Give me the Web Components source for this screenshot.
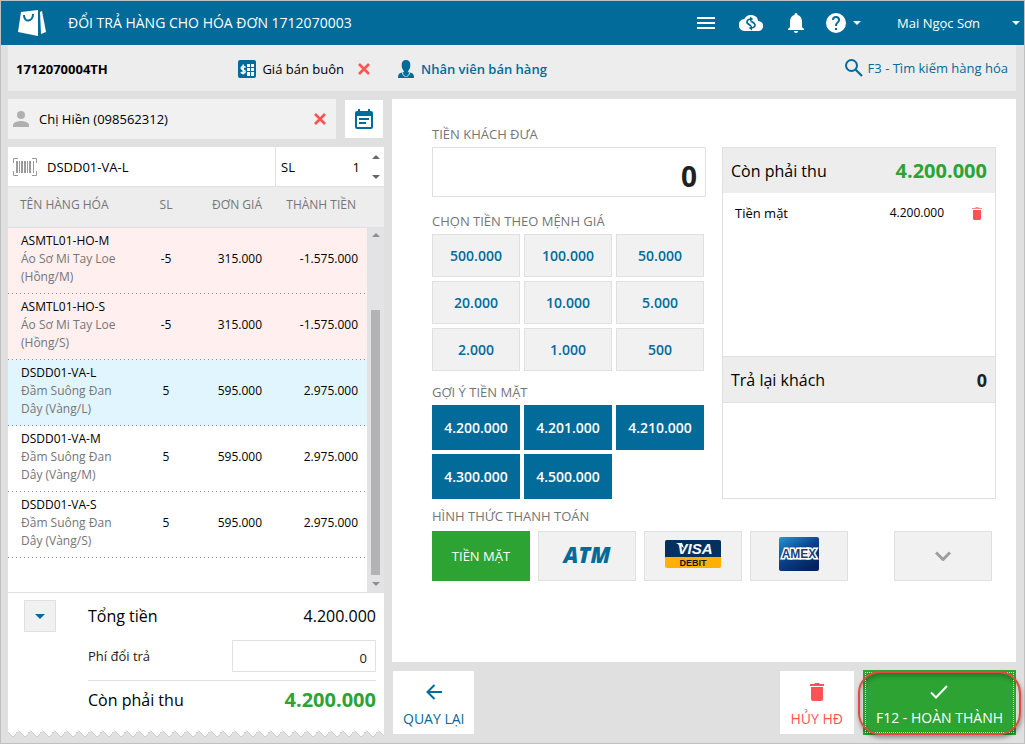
<!DOCTYPE html>
<html lang="vi">
<head>
<meta charset="utf-8">
<meta name="viewport" content="width=device-width, initial-scale=1">
<title>Đổi trả hàng</title>
<style>
  html, body { margin: 0; }
  body {
    --blue: #026b99;
    --green: #2ca333;
    --red: #ff5252;
    --line: #e0e0e0;
    --muted: #757575;
    font: 13px/18px "Open Sans", "Noto Sans", sans-serif;
    color: #000;
    background: #e0e0e0;
  }
</style>
</head>
<body>
<pos-app></pos-app>

<script>
const RESET = `
  *, *::before, *::after { box-sizing: border-box; }
  :host { box-sizing: border-box; }
  :host([hidden]) { display: none; }
  button, input { font: inherit; color: inherit; margin: 0; border: 0; padding: 0; background: none; border-radius: 0; outline: 0; }
  button { cursor: pointer; }
  a { color: inherit; text-decoration: none; }
  input { min-width: 0; width: 100%; }
`;

function define(name, html, setup) {
  const template = document.createElement('template');
  template.innerHTML = html.replace('<style>', '<style>' + RESET);
  customElements.define(name, class extends HTMLElement {
    constructor() {
      super();
      this.attachShadow({ mode: 'open' }).append(template.content.cloneNode(true));
    }
    connectedCallback() { if (setup) setup(this, this.shadowRoot); }
  });
}

/* name: [width, height, markup] */
const ICONS = {
  logo: [30, 28, '<path fill="#fff" d="M4 3 21 1v26L1 23z"/><path fill="#fff" d="M23 3l2-1 4 21-5 2z"/><path fill="none" stroke="#026b99" stroke-width="2" d="M7 6c0 8 9 7 9-1"/>'],
  menu: [18, 12, '<path fill="currentColor" d="M0 0h18v2H0zM0 5h18v2H0zM0 10h18v2H0z"/>'],
  cloud: [24, 16, '<path fill="currentColor" d="M19.300 6A7.500 7.500 0 0 0 5.300 4 6 6 0 0 0 6 16h13a5 5 0 0 0 .3-10z"/><path fill="none" stroke="#026b99" stroke-width="1.700" d="M11.500 4C8 4.500 7 7 9 8.800l3 2.200M12.500 13c3.500-.5 4.500-3 2.500-4.800L12 6"/><path fill="#026b99" d="M11 1.500 14.200 4 11 6.500zM13 10.500 9.800 13l3.200 2.500z"/>'],
  bell: [18, 20, '<path fill="currentColor" d="M9 20a2.200 2.200 0 0 0 2.200-2H6.800A2.200 2.200 0 0 0 9 20zm6-6V8.500c0-3.200-1.600-5.700-4.500-6.400V1.500a1.500 1.500 0 0 0-3 0v.6C4.600 2.800 3 5.300 3 8.500V14l-2 2v1h16v-1z"/>'],
  help: [20, 20, '<path fill="currentColor" d="M10 0a10 10 0 1 0 0 20 10 10 0 0 0 0-20zm1 17H9v-2h2zm2.070-7.750-.9.920C11.450 10.900 11 11.500 11 13H9v-.5c0-1.100.45-2.100 1.170-2.830l1.240-1.260c.37-.36.59-.86.590-1.410a2 2 0 0 0-4 0H6a4 4 0 0 1 8 0c0 .88-.36 1.680-.93 2.250z"/>'],
  caret: [8, 4, '<path fill="currentColor" d="M0 0h8L4 4z"/>'],
  caretBig: [10, 5, '<path fill="currentColor" d="M0 0h10L5 5z"/>'],
  up: [8, 4, '<path fill="currentColor" d="M0 4h8L4 0z"/>'],
  price: [18, 18, '<rect width="18" height="18" rx="2" fill="#026b99"/><path fill="#fff" d="M9 4h3v3H9zM13 4h3v3h-3zM9 8h3v3H9zM13 8h3v3h-3zM9 12h3v4H9zM13 12h3v4h-3z"/><path fill="none" stroke="#fff" stroke-width="1.500" d="M7.500 7.500C6 6 3.200 6.200 3.200 8c0 2.200 4 1.600 4 3.700 0 1.800-3 2.200-4.400.6M5.200 4.500v10"/>'],
  close: [12, 12, '<path stroke="currentColor" stroke-width="2.600" d="M1 1l10 10M11 1 1 11"/>'],
  agent: [16, 18, '<path fill="currentColor" d="M8 0c3 0 4.500 2 4.300 5-.1 2.500-.5 4-1.800 5.500L10 12l3.500 1c1.700.5 2.500 1.500 2.500 5H0c0-3.500.8-4.500 2.500-5L6 12l-.5-1.500C4.200 9 3.800 7.500 3.700 5 3.500 2 5 0 8 0z"/><path fill="none" stroke="#ededed" d="M4.500 12.500 5 14.500 7.500 17M11.500 12.500 11 14.500 8.500 17"/>'],
  search: [18, 18, '<circle cx="6.500" cy="6.500" r="5.500" fill="none" stroke="currentColor" stroke-width="2"/><path stroke="currentColor" stroke-width="2.200" d="M10.500 10.500 17 17"/>'],
  person: [16, 16, '<circle cx="8" cy="4" r="4" fill="currentColor"/><path fill="currentColor" d="M0 16v-2c0-2.700 5.300-4 8-4s8 1.300 8 4v2z"/>'],
  calendar: [18, 20, '<path fill="currentColor" fill-rule="evenodd" d="M3 0h2v2h8V0h2v2h1a2 2 0 0 1 2 2v14a2 2 0 0 1-2 2H2a2 2 0 0 1-2-2V4a2 2 0 0 1 2-2h1zM2 7v11h14V7zM4 9h10v2H4zM4 13h7v2H4z"/>'],
  barcode: [24, 18, '<path fill="none" stroke="currentColor" stroke-width="1" d="M5 .5H.5V5M19 .500h4.500V5M5 17.500H.5V13M19 17.500h4.500V13"/><path fill="currentColor" d="M3 3h2v12H3zM6 3h1v12H6zM8 3h2v12H8zM11 3h2v12h-2zM14 3h1v12h-1zM16 3h2v12h-2zM20 3h1v12h-1z"/>'],
  trash: [14, 18, '<path fill="currentColor" d="M0 1h4l1-1h4l1 1h4v2H0zM1 4h12v12a2 2 0 0 1-2 2H3a2 2 0 0 1-2-2z"/>'],
  bin: [10, 13, '<path fill="currentColor" opacity=".7" d="M0 1h3l1-1h2l1 1h3v1H0z"/><path fill="currentColor" d="M1 3h8v9l-1 1H2l-1-1z"/>'],
  back: [16, 16, '<path fill="none" stroke="currentColor" stroke-width="2" d="M16 8H2M8.500 1 1.500 8l7 7"/>'],
  check: [18, 14, '<path fill="none" stroke="currentColor" stroke-width="2" d="M1 7.500 6 12.500 17 1"/>'],
  chevron: [16, 10, '<path fill="none" stroke="currentColor" stroke-width="3" d="M1 1.500l7 7 7-7"/>'],
  visa: [56, 28, '<rect width="56" height="28" rx="2" fill="#ffb000"/><path fill="#03305f" d="M2 0h52a2 2 0 0 1 2 2v15H0V2a2 2 0 0 1 2-2z"/><path fill="#fff" d="M11 3h6l2 5z"/><g font-family="Liberation Sans" font-weight="700" text-anchor="middle"><text x="30" y="14" font-size="15" font-style="italic" fill="#fff">VISA</text><text x="28" y="26" font-size="9" font-style="normal" fill="#10141c">DEBIT</text></g>'],
  amex: [40, 34, '<defs><linearGradient id="g" x1="0" y1="0" x2=".7" y2="1"><stop offset="0" stop-color="#2597d3"/><stop offset=".55" stop-color="#0a3f87"/><stop offset="1" stop-color="#02235c"/></linearGradient></defs><rect width="40" height="34" rx="2" fill="url(#g)"/><text x="20" y="21" text-anchor="middle" font-family="Liberation Sans" font-size="12" font-weight="700" font-style="normal" fill="#1a3f7c" stroke="#fff" stroke-width="3" paint-order="stroke">AMEX</text>'],
};

define('pos-icon', `<style>
  :host { display: inline-flex; flex: none; }
  svg { display: block; }
</style>`, (host, root) => {
  const [w, h, body] = ICONS[host.getAttribute('name')];
  const holder = document.createElement('template');
  holder.innerHTML = `<svg width="${w}" height="${h}" viewBox="0 0 ${w} ${h}" aria-hidden="true">${body}</svg>`;
  root.append(holder.content);
});

define('pos-header', `<style>
  :host { display: block; background: var(--blue); color: #fff; }
  header { display: flex; align-items: center; height: 44px; padding: 0 4px 0 16px; }
  h1 { margin: 0 auto 0 21px; font-size: 14px; font-weight: 400; white-space: nowrap; }
  nav { display: flex; align-items: center; }
  button { display: flex; align-items: center; gap: 7px; height: 44px; }
  nav > button + button { margin-left: 24px; }
  nav > .bell + .help { margin-left: 21px; }
  nav > .help + .user { gap: 32px; margin-left: 36px; }
</style>
<header>
  <pos-icon name="logo"></pos-icon>
  <h1>ĐỔI TRẢ HÀNG CHO HÓA ĐƠN 1712070003</h1>
  <nav>
    <button aria-label="Menu"><pos-icon name="menu"></pos-icon></button>
    <button aria-label="Đồng bộ"><pos-icon name="cloud"></pos-icon></button>
    <button class="bell" aria-label="Thông báo"><pos-icon name="bell"></pos-icon></button>
    <button class="help" aria-label="Trợ giúp"><pos-icon name="help"></pos-icon><pos-icon name="caret"></pos-icon></button>
    <button class="user">Mai Ngọc Sơn<pos-icon name="caret"></pos-icon></button>
  </nav>
</header>`);

define('pos-toolbar', `<style>
  :host { display: grid; grid-template-columns: 47fr 78fr; gap: 8px; height: 46px; background: #ededed; }
  div { display: flex; align-items: center; padding: 2px 14px 0 8px; }
  .right { padding: 0 8px 0 6px; color: var(--blue); }
  strong { margin-right: auto; }
  pos-icon[name=price] { margin-right: 6px; }
  .close { display: flex; margin-left: 14px; color: var(--red); }
  .agent { display: flex; align-items: center; gap: 7px; margin-right: auto; font-weight: 600; padding-top: 2px; }
  .search { display: flex; align-items: center; gap: 5px; }
</style>
<div>
  <strong>1712070004TH</strong>
  <pos-icon name="price"></pos-icon><span>Giá bán buôn</span>
  <button class="close" aria-label="Bỏ bảng giá"><pos-icon name="close"></pos-icon></button>
</div>
<div class="right">
  <a class="agent" href="#nhan-vien"><pos-icon name="agent"></pos-icon>Nhân viên bán hàng</a>
  <a class="search" href="#tim-kiem"><pos-icon name="search"></pos-icon>F3 - Tìm kiếm hàng hóa</a>
</div>`);

define('pos-customer', `<style>
  :host { display: flex; align-items: center; gap: 9px; padding-right: 1px; }
  .name { flex: 1; display: flex; align-items: center; height: 40px; padding: 0 10px 0 5px; background: #f1f1f1; }
  .name pos-icon[name=person] { color: #b0b0b0; margin-right: 10px; }
  .close { display: flex; color: var(--red); }
  .history { flex: none; display: grid; place-items: center; width: 38px; height: 38px; background: #fff; color: var(--blue); }
</style>
<div class="name">
  <pos-icon name="person"></pos-icon>
  <input aria-label="Khách hàng" value="Chị Hiền (098562312)">
  <button class="close" aria-label="Bỏ khách hàng"><pos-icon name="close"></pos-icon></button>
</div>
<button class="history" aria-label="Lịch hẹn"><pos-icon name="calendar"></pos-icon></button>`);

define('pos-scan', `<style>
  :host { display: flex; height: 40px; background: #fff; border-bottom: 1px solid var(--line); }
  .code { flex: 1; display: flex; align-items: center; gap: 10px; padding-left: 5px; }
  .code pos-icon { color: #9a9a9a; }
  .qty { flex: none; display: flex; align-items: center; width: 109px; padding: 0 4px 0 5px; border-left: 1px solid var(--line); }
  .qty input { text-align: right; padding-right: 12px; }
  .spin { flex: none; display: flex; flex-direction: column; justify-content: space-between; height: 24px; color: #666; }
  .spin button { display: flex; }
</style>
<div class="code">
  <pos-icon name="barcode"></pos-icon>
  <input aria-label="Mã hàng hóa" value="DSDD01-VA-L">
</div>
<div class="qty">
  <label for="qty">SL</label>
  <input id="qty" value="1">
  <span class="spin">
    <button aria-label="Tăng"><pos-icon name="up"></pos-icon></button>
    <button aria-label="Giảm"><pos-icon name="caret"></pos-icon></button>
  </span>
</div>`);

const ITEMS = [
  ['ASMTL01-HO-M', 'Áo Sơ Mi Tay Loe (Hồng/M)', '-5', '315.000', '-1.575.000', 'returned'],
  ['ASMTL01-HO-S', 'Áo Sơ Mi Tay Loe (Hồng/S)', '-5', '315.000', '-1.575.000', 'returned'],
  ['DSDD01-VA-L', 'Đầm Suông Đan Dây (Vàng/L)', '5', '595.000', '2.975.000', 'selected'],
  ['DSDD01-VA-M', 'Đầm Suông Đan Dây (Vàng/M)', '5', '595.000', '2.975.000', ''],
  ['DSDD01-VA-S', 'Đầm Suông Đan Dây (Vàng/S)', '5', '595.000', '2.975.000', ''],
];

define('pos-items', `<style>
  :host { display: flex; align-items: stretch; background: #fff; border-bottom: 1px solid var(--line); font-size: 12px; }
  .list { flex: 1; }
  table { width: 100%; table-layout: fixed; border-collapse: separate; border-spacing: 0; }
  th { height: 41px; padding: 0 0 4px; font-weight: 400; color: var(--muted); background: #ededed; border-bottom: 1px solid var(--line); white-space: nowrap; }
  td { height: 66px; padding: 4px 0 8px; }
  th:nth-child(1), td:nth-child(1) { text-align: left; padding-left: 13px; padding-right: 8px; }
  th:nth-child(1) { padding-left: 12px; }
  th:nth-child(2), td:nth-child(2) { width: 64px; text-align: center; }
  th:nth-child(3), td:nth-child(3) { width: 72px; text-align: right; padding-right: 8px; }
  th:nth-child(4), td:nth-child(4) { width: 97px; text-align: right; padding-right: 9px; }
  th:nth-child(4) { padding-right: 11px; }
  small { display: block; font-size: 12px; color: var(--muted); }
  tbody tr { background: repeating-linear-gradient(90deg, #888 0 1px, transparent 1px 4px) 0 100% / 100% 1px no-repeat; }
  tbody .returned { background-color: #ffefef; }
  tbody .selected { background-color: #e1f5fe; }
  .side { flex: none; width: 17px; display: flex; flex-direction: column; }
  .cap { height: 41px; background: #ededed; border-bottom: 1px solid var(--line); }
  .bar { flex: 1; display: flex; flex-direction: column; align-items: center; gap: 7px; padding: 5px 0 6px; background: #e3e3e6; color: #8f8f8f; }
  .track { flex: 1; width: 9px; display: flex; flex-direction: column; justify-content: flex-end; }
  .thumb { height: 80%; background: #b3b3b6; }
</style>
<div class="list">
  <table>
    <thead><tr><th>TÊN HÀNG HÓA</th><th>SL</th><th>ĐƠN GIÁ</th><th>THÀNH TIỀN</th></tr></thead>
    <tbody></tbody>
  </table>
</div>
<div class="side">
  <div class="cap"></div>
  <div class="bar"><pos-icon name="up"></pos-icon><div class="track"><div class="thumb"></div></div><pos-icon name="caret"></pos-icon></div>
</div>`, (host, root) => {
  root.querySelector('tbody').innerHTML = ITEMS.map(([code, name, qty, price, total, state]) =>
    `<tr class="${state}"><td>${code}<small>${name}</small></td><td>${qty}</td><td>${price}</td><td>${total}</td></tr>`).join('');
});

define('pos-totals', `<style>
  :host { display: block; }
  .sheet { display: flex; align-items: flex-start; gap: 32px; padding: 7px 8px 9px 16px; background: #fff; }
  .more { flex: none; display: grid; place-items: center; width: 32px; height: 32px; background: #f1f1f1; border: 1px solid var(--line); color: var(--blue); }
  .rows { flex: 1; display: grid; gap: 8px; }
  .row { display: flex; align-items: center; justify-content: space-between; height: 32px; font-size: 16px; }
  .fee { font-size: 13px; color: #212121; }
  .fee input { width: 50%; height: 32px; padding: 4px 8px 0; border: 1px solid var(--line); text-align: right; }
  .due { height: 41px; padding-bottom: 2px; border-top: 1px solid var(--line); }
  .due b { font-size: 20px; color: var(--green); }
  .edge { height: 6px; background: conic-gradient(from 315deg at 50% 100%, #fff 90deg, transparent 0) -1px 0 / 12px 6px; filter: drop-shadow(0 1px 0 #d0d0d0); }
</style>
<div class="sheet">
  <button class="more" aria-label="Chi tiết"><pos-icon name="caretBig"></pos-icon></button>
  <div class="rows">
    <div class="row"><span>Tổng tiền</span><span>4.200.000</span></div>
    <div class="row fee"><label for="fee">Phí đổi trả</label><input id="fee" value="0"></div>
    <div class="row due"><span>Còn phải thu</span><b>4.200.000</b></div>
  </div>
</div>
<div class="edge"></div>`);

define('pos-key', `<style>
  :host { display: block; }
  button { width: 100%; height: 43px; font-size: 14px; font-weight: 600; color: var(--blue); background: #f1f1f1; border: 1px solid var(--line); }
  :host([solid]) button { height: 45px; color: #fff; background: var(--blue); border: 0; }
</style>
<button><slot></slot></button>`);

define('pos-method', `<style>
  :host { display: block; flex: none; width: 98px; }
  button { display: flex; align-items: center; justify-content: center; width: 100%; height: 50px; background: #f1f1f1; border: 1px solid var(--line); color: #9e9e9e; }
  :host([logo]) button { padding-bottom: 5px; font-size: 22px; font-weight: 800; font-style: italic; color: var(--blue); }
  :host([active]) button { background: var(--green); border: 0; color: #fff; }
</style>
<button><slot></slot></button>`);

define('pos-summary', `<style>
  :host { display: grid; grid-template-rows: 45px 163fr 47px 95fr; border: 1px solid var(--line); }
  .head { display: flex; align-items: center; justify-content: space-between; padding: 0 8px; background: #ededed; font-size: 16px; }
  .head b { font-size: 20px; color: var(--green); }
  .head.change { border: solid var(--line); border-width: 1px 0; }
  .head.change b { font-size: 18px; color: #212121; }
  .paid { padding: 11px 13px 11px 12px; }
  .line { display: flex; align-items: center; }
  .line span:first-child { margin-right: auto; }
  .line .sum { font-size: 12px; }
  .line button { display: flex; margin-left: 28px; color: var(--red); }
</style>
<div class="head"><span>Còn phải thu</span><b>4.200.000</b></div>
<div class="paid"><div class="line"><span>Tiền mặt</span><span class="sum">4.200.000</span><button aria-label="Xóa"><pos-icon name="bin"></pos-icon></button></div></div>
<div class="head change"><span>Trả lại khách</span><b>0</b></div>
<div></div>`);

define('pos-payment', `<style>
  :host { display: block; background: #fff; padding: 26px 20px 16px 40px; }
  .top { display: grid; grid-template-columns: 1fr 1fr; gap: 16px; }
  pos-summary { margin-top: 22px; }
  h2, label { display: block; margin: 0; font-size: 13px; font-weight: 400; line-height: 18px; color: var(--muted); }
  label { margin-bottom: 4px; }
  h2 { margin: 12px 0 4px; }
  input + h2 { margin-top: 15px; }
  .top + h2 { margin: 8px 0 6px; }
  input { display: block; height: 50px; padding: 8px 8px 0; border: 1px solid var(--line); text-align: right; font-size: 28px; font-weight: 700; color: #212121; }
  .keys { display: grid; grid-template-columns: repeat(3, 1fr); gap: 4px; padding-right: 2px; }
  .methods { display: flex; gap: 8px; padding-right: 4px; }
  .methods pos-method:last-child { margin-left: auto; }
</style>
<div class="top">
  <section>
    <label for="cash">TIỀN KHÁCH ĐƯA</label>
    <input id="cash" value="0">
    <h2>CHỌN TIỀN THEO MỆNH GIÁ</h2>
    <div class="keys">
      <pos-key>500.000</pos-key><pos-key>100.000</pos-key><pos-key>50.000</pos-key>
      <pos-key>20.000</pos-key><pos-key>10.000</pos-key><pos-key>5.000</pos-key>
      <pos-key>2.000</pos-key><pos-key>1.000</pos-key><pos-key>500</pos-key>
    </div>
    <h2>GỢI Ý TIỀN MẶT</h2>
    <div class="keys">
      <pos-key solid>4.200.000</pos-key><pos-key solid>4.201.000</pos-key><pos-key solid>4.210.000</pos-key>
      <pos-key solid>4.300.000</pos-key><pos-key solid>4.500.000</pos-key>
    </div>
  </section>
  <pos-summary></pos-summary>
</div>
<h2>HÌNH THỨC THANH TOÁN</h2>
<div class="methods">
  <pos-method active>TIỀN MẶT</pos-method>
  <pos-method logo>ATM</pos-method>
  <pos-method logo><pos-icon name="visa"></pos-icon></pos-method>
  <pos-method logo><pos-icon name="amex"></pos-icon></pos-method>
  <pos-method><pos-icon name="chevron"></pos-icon></pos-method>
</div>`);

define('pos-action', `<style>
  :host { display: block; position: relative; color: var(--blue); }
  button { display: flex; flex-direction: column; align-items: center; justify-content: space-between; height: 63px; padding: 12px 10px 6px; background: #fff; font-size: 14px; white-space: nowrap; }
  .icon { display: flex; align-items: center; height: 18px; }
  :host([danger]) { color: var(--red); }
  :host([danger]) button { padding: 12px 11px 6px; }
  :host([primary]) { color: #fff; }
  :host([primary]) button { height: 65px; padding: 13px 13px 8px; background: var(--green); outline: 1px dotted #fff; outline-offset: -3px; }
  .ring { display: none; }
  :host([primary]) .ring { display: block; position: absolute; inset: 1px -5px 0; border: 2px solid #e5483f; border-radius: 22px; box-shadow: 1px 3px 4px rgba(0, 0, 0, .35), inset 1px 3px 4px rgba(0, 0, 0, .25); pointer-events: none; }
</style>
<button><span class="icon"><slot name="icon"></slot></span><span><slot></slot></span></button>
<div class="ring"></div>`);

define('pos-app', `<style>
  :host { display: flex; flex-direction: column; min-height: 100vh; border: 1px solid #c0c0c0; }
  pos-toolbar { margin: 0 8px 0 7px; }
  main { flex: 1; display: grid; grid-template-columns: 47fr 78fr; gap: 8px; padding: 8px 8px 7px 7px; }
  .cart, .pay { display: flex; flex-direction: column; min-width: 0; }
  pos-customer { margin-bottom: 8px; }
  pos-items, pos-payment { flex: 1; }
  .actions { display: flex; align-items: center; gap: 9px; padding: 8px 0 1px 1px; }
  .actions pos-action:first-child { margin-right: auto; }
</style>
<pos-header></pos-header>
<pos-toolbar></pos-toolbar>
<main>
  <div class="cart">
    <pos-customer></pos-customer>
    <pos-scan></pos-scan>
    <pos-items></pos-items>
    <pos-totals></pos-totals>
  </div>
  <div class="pay">
    <pos-payment></pos-payment>
    <div class="actions">
      <pos-action><pos-icon slot="icon" name="back"></pos-icon>QUAY LẠI</pos-action>
      <pos-action danger><pos-icon slot="icon" name="trash"></pos-icon>HỦY HĐ</pos-action>
      <pos-action primary><pos-icon slot="icon" name="check"></pos-icon>F12 - HOÀN THÀNH</pos-action>
    </div>
  </div>
</main>`);
</script>
</body>
</html>
